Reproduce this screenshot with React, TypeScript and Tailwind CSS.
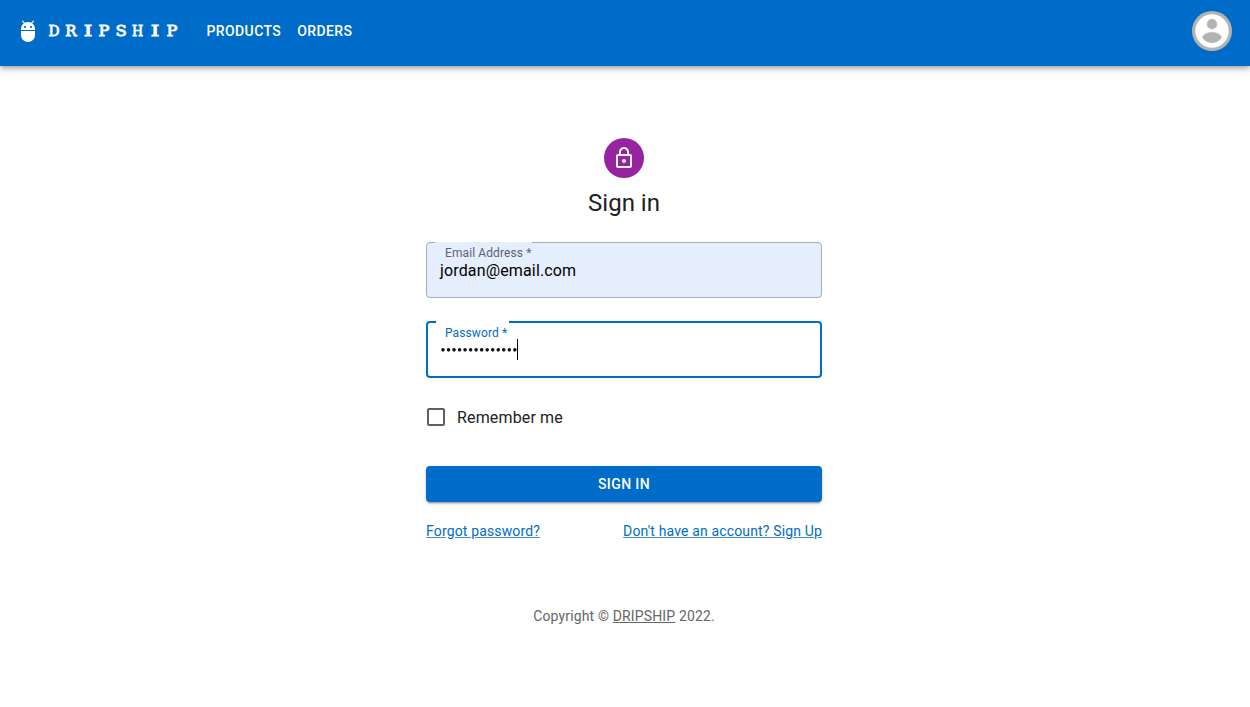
import React from "react";
import { MdAdb, MdLockOutline } from "react-icons/md";

const brand = [
  { letter: "D", scale: "scale-x-92" },
  { letter: "R", scale: "scale-x-100" },
  { letter: "I", scale: "scale-x-145" },
  { letter: "P", scale: "scale-x-108" },
  { letter: "S", scale: "scale-x-110" },
  { letter: "H", scale: "scale-x-85" },
  { letter: "I", scale: "scale-x-145" },
  { letter: "P", scale: "scale-x-108" },
];

function Header() {
  return (
    <header className="relative flex h-[66px] items-center bg-[#006cc9] pr-[18px] pb-1 pl-4 text-white shadow-[0_2px_4px_-1px_rgba(0,0,0,0.2),0_4px_5px_0_rgba(0,0,0,0.14),0_1px_10px_0_rgba(0,0,0,0.12)]">
      <MdAdb className="size-6" />
      <a
        aria-label="DRIPSHIP"
        className="ml-[5.6px] flex font-[family-name:'DejaVu_Serif',serif] text-[15px] leading-8 font-normal [-webkit-text-stroke:0.85px_white]"
      >
        {brand.map(({ letter, scale }, i) => (
          <span key={i} className="flex w-[16.8px] justify-center">
            <span className={scale}>{letter}</span>
          </span>
        ))}
      </a>
      <nav className="ml-[26.5px] flex gap-4 text-sm font-medium tracking-[0.4px]">
        <a>PRODUCTS</a>
        <a>ORDERS</a>
      </nav>
      <svg viewBox="0 0 40 40" className="ml-auto size-10">
        <circle cx="20" cy="20" r="20" fill="#b3b3b3" />
        <circle cx="20" cy="20" r="16.7" fill="#fff" />
        <circle cx="20" cy="13.2" r="5.1" fill="#b3b3b3" />
        <path d="M10.2 26.3C11.4 23 15.5 21.2 20 21.2s8.6 1.8 9.8 5.1C28 29.5 24.3 31.9 20 31.9s-8-2.4-9.8-5.6Z" fill="#b3b3b3" />
      </svg>
    </header>
  );
}

export default function App() {
  return (
    <div className="min-h-[707px] bg-white font-[Roboto,sans-serif] text-[#212121]">
      <Header />
      <main className="mx-auto flex w-[396px] -translate-x-px flex-col items-center pt-[72px]">
        <div className="flex size-10 items-center justify-center rounded-full bg-[#9823a1] text-white">
          <MdLockOutline className="size-6" />
        </div>
        <h1 className="mt-[9px] text-2xl leading-8">Sign in</h1>

        <form className="mt-[23px] w-full">
          <div className="relative h-14 rounded-[4px] border border-[#a5acba] bg-[#e5eefd] pt-[3px] pl-[13px]">
            <span className="absolute -top-px left-2 h-px w-[97px] bg-[#e5eefd]" />
            <label className="block pl-[5px] text-xs leading-[14px] tracking-[0.1px] text-[#5c6270]">
              Email Address *
            </label>
            <div className="text-base leading-[21px] tracking-[0.15px] text-black">jordan@email.com</div>
          </div>

          <div className="relative mt-[23px] h-[57px] rounded-[4px] border-2 border-[#006cc9] pt-[3px] pl-3">
            <span className="absolute -top-0.5 left-2 h-0.5 w-[73px] bg-white" />
            <label className="block pl-[5px] text-xs leading-[14px] tracking-[0.1px] text-[#006cc9]">
              Password *
            </label>
            <div className="-mt-px flex items-start pl-[0.8px]">
              <svg viewBox="0 0 77 21" className="h-[21px] w-[76px] shrink-0" fill="#111" preserveAspectRatio="xMinYMin">
                {Array.from({ length: 14 }, (_, i) => (
                  <circle key={i} cx={2 + i * 5.6} cy="11" r="1.8" />
                ))}
              </svg>
              <span className="h-[21px] w-px bg-black" />
            </div>
          </div>

          <label className="mt-[27px] flex h-6 items-center text-base tracking-[0.15px]">
            <span className="ml-px size-[18px] rounded-[2px] border-2 border-[#5f5f5f]" />
            <span className="ml-3 pt-0.5">Remember me</span>
          </label>

          <button
            type="button"
            className="mt-[37px] h-9 w-full rounded-[4px] bg-[#006cc9] text-sm font-medium tracking-[0.4px] text-white shadow-[0_3px_1px_-2px_rgba(0,0,0,0.2),0_2px_2px_0_rgba(0,0,0,0.14),0_1px_5px_0_rgba(0,0,0,0.12)]"
          >
            SIGN IN
          </button>

          <div className="mt-[19px] flex justify-between text-sm leading-5 tracking-[0.15px] text-[#006cc9] underline decoration-[#006cc9]/50">
            <a>Forgot password?</a>
            <a>Don't have an account? Sign Up</a>
          </div>
        </form>

        <p className="mt-[65px] text-sm leading-5 tracking-[0.15px] text-[#666]">
          Copyright © <a className="underline">DRIPSHIP</a> 2022.
        </p>
      </main>
    </div>
  );
}
